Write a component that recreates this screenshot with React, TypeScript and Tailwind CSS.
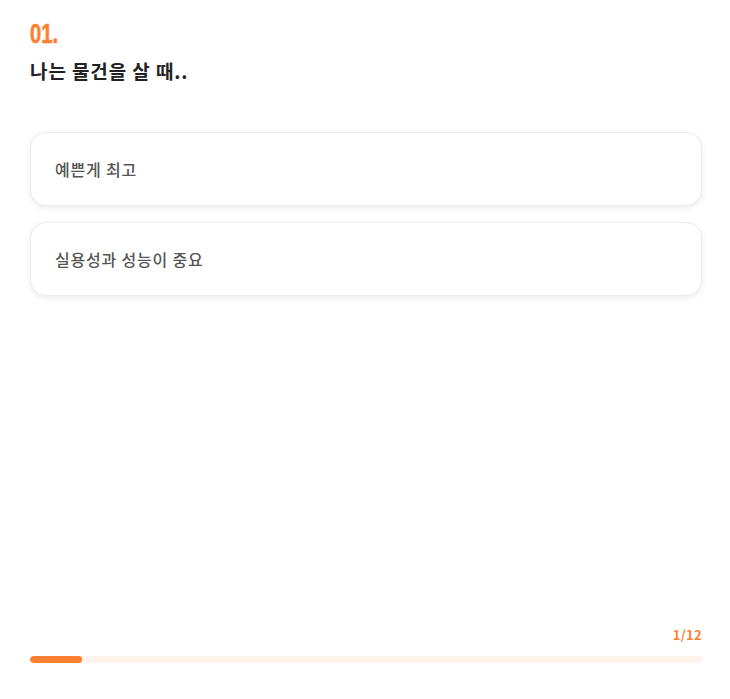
import React from 'react';

export default function App() {
  const options = ['예쁜게 최고', '실용성과 성능이 중요'];
  const current = 1;
  const total = 12;

  return (
    <div
      className="h-screen flex flex-col bg-white pl-[30px] pr-[28px] pt-[20px] pb-[36px]"
      style={{ fontFamily: '"Noto Sans CJK KR", "Noto Sans", sans-serif' }}
    >
      <div className="h-[28px] flex items-end">
        <span
          className="inline-block origin-left scale-x-[0.75] text-[27px] leading-[28px] font-black text-[#ff7f32] [-webkit-text-stroke:0.6px_#ff7f32]"
          style={{ fontFamily: '"Liberation Sans", Arial, sans-serif' }}
        >
          01.
        </span>
      </div>
      <h1 className="mt-[9px] text-[19px] leading-[28px] font-bold text-[#222] tracking-[0.9px]">
        나는 물건을 살 때..
      </h1>

      <div className="mt-[47px] flex flex-col gap-[16px]">
        {options.map((o, i) => (
          <button
            key={i}
            className="h-[74px] w-full text-left px-[24px] bg-white border border-[#ececec] rounded-[16px] shadow-[0_2px_6px_rgba(0,0,0,0.08)] text-[16px] font-medium text-[#555] tracking-[0.8px]"
          >
            {o}
          </button>
        ))}
      </div>

      <div className="mt-auto">
        <div className="text-right text-[13px] font-bold text-[#ff7f32] leading-[18px] tracking-[0.3px]">
          {current}/{total}
        </div>
        <div className="mt-[12px] h-[7px] rounded-full bg-[#fff3ec] overflow-hidden">
          <div className="h-full rounded-full bg-[#ff7f32]" style={{ width: `${(current / total) * 93}%` }} />
        </div>
      </div>
    </div>
  );
}
